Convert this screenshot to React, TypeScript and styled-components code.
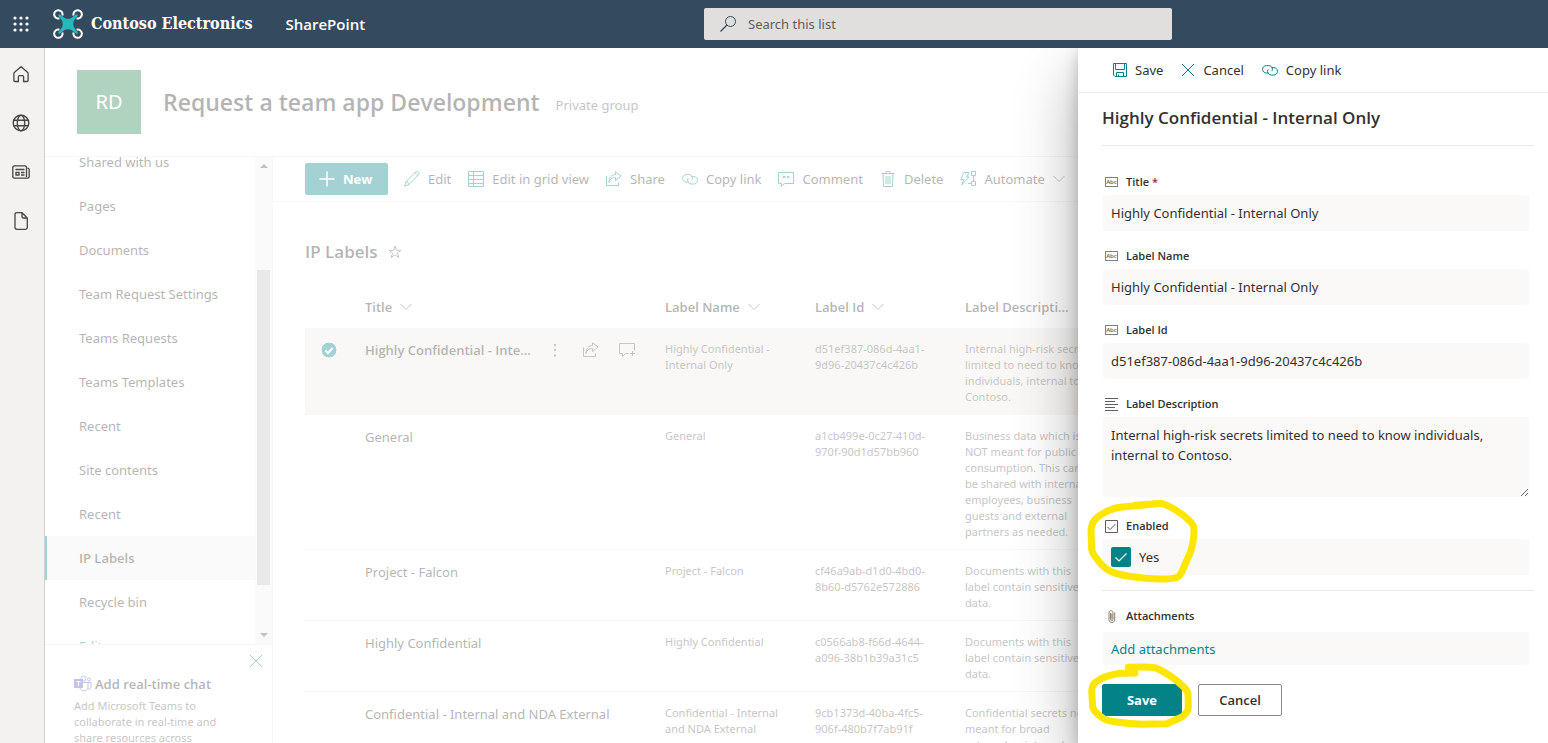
import React from "react";
import styled, { createGlobalStyle } from "styled-components";

const teal = "#038387";
const ink = "#323130";
const strong = `font-family: "Open Sans", sans-serif; font-weight: 600;`;

const Global = createGlobalStyle`
  * { box-sizing: border-box; }
  body {
    margin: 0;
    background: #fff;
    color: ${ink};
    font-family: "Noto Sans", "Open Sans", sans-serif;
    font-size: 13px;
    line-height: 20px;
  }
  button, input, textarea { font: inherit; color: inherit; }
  a { color: inherit; text-decoration: none; }
  h1, h2, h3, p, ul { margin: 0; padding: 0; }
`;

/* ---------- icons ---------- */

type IconProps = { size?: number; box?: string; children: React.ReactNode };

const Svg = styled.svg`
  flex: none;
  display: block;
  fill: none;
  stroke: currentColor;
  stroke-width: 1;
`;

const Icon = ({ size = 16, box = "0 0 16 16", children }: IconProps) => (
  <Svg width={size} height={size} viewBox={box} aria-hidden="true">{children}</Svg>
);

const ShareIcon = () => (
  <Icon>
    <path d="M.5 5.5v9h12v-3M3 11.5c.6-3.400 3-5 6.500-5V9.500L15.200 5 9.500.800V3.500C5.500 3.700 3.200 6.500 3 11.500z" />
  </Icon>
);
const LinkIcon = () => (
  <Icon>
    <path d="M6.500 11H4.200C2.100 11 .6 9.400.6 7.300S2.200 3.600 4.300 3.600h2.400c2.100 0 3.700 1.500 3.700 3.600 0 .8-.2 1.400-.6 2M9.500 5.600h2.300c2.100 0 3.700 1.600 3.700 3.700S13.900 13 11.800 13H9.300c-2.100 0-3.700-1.600-3.700-3.700 0-.8.2-1.500.7-2.100" />
  </Icon>
);
const ChevronIcon = () => (
  <Icon size={12} box="0 0 12 12"><path d="M.5 3l5.500 5.500L11.500 3" stroke="#605e5c" /></Icon>
);
const CloseIcon = ({ size = 14 }: { size?: number }) => (
  <Icon size={size} box="0 0 14 14"><path d="M1 1l12 12M13 1L1 13" /></Icon>
);
const PencilIcon = () => (
  <Icon><path d="M.7 15.300l1.300-4.800L11.700.900c.8-.8 1.900-.6 2.700.1s.9 1.900.1 2.700L5 13.500zM2 10.500c1.700.3 2.700 1.300 3 3M10.700 2c1.700.3 2.500 1.200 2.800 2.800" /></Icon>
);
const GridIcon = () => (
  <Icon><path d="M.5.5h15v15H.5zM5.500.5v15M.5 4.500h15M.5 8.500h15M.5 12.500h15" /></Icon>
);
const CommentIcon = () => (
  <Icon>
    <path d="M.5 1.500h15v11H6.800L3.500 15.300v-2.800h-3z" />
    <path d="M5 5.500h2v2M9 5.500h2v2M5.500 5.500v1.500M9.500 5.500v1.500" />
  </Icon>
);
const CommentAddIcon = () => (
  <Icon><path d="M9.500 11.500H6.500L3.500 14.500v-3h-3v-10h15v7M13.500 9v5M11 11.500h5" /></Icon>
);
const TrashIcon = () => (
  <Icon><path d="M1.500 2.500h13M6 2.500v-2h4v2M3 2.500l.5 13h9l.5-13M6 5v8M8 5v8M10 5v8" /></Icon>
);
const AutomateIcon = () => (
  <Icon>
    <path d="M4 1.500h5L6.500 6H9l-7.500 8L4 8.500H.8zM11.500.5h4v4h-4zM11.500 10.500h4v4h-4zM13.500 4.500v6M8 12.500h3.500" />
  </Icon>
);
const DiskIcon = () => (
  <Icon size={14} box="0 0 14 14">
    <path d="M.5.5h13v13H2l-1.500-1.500zM2.500.5v6h9v-6M3.500 13.500v-4h7v4M5.500 11.500v2" />
  </Icon>
);
const TextTypeIcon = () => (
  <Svg width="13" height="10" viewBox="0 0 13 10" aria-hidden="true">
    <rect x=".5" y=".5" width="12" height="9" stroke="#7a8583" />
    <text x="6.500" y="7" fontSize="6" fontWeight="600" textAnchor="middle" fill="#605e5c" stroke="none">Abc</text>
  </Svg>
);
const LinesIcon = () => (
  <Icon size={13} box="0 0 13 13"><path d="M0 .5h13M0 3.500h10M0 6.500h13M0 9.500h10M0 12.500h13" stroke="#605e5c" /></Icon>
);
const CheckBoxIcon = () => (
  <Icon size={13} box="0 0 13 13">
    <path d="M.5.5h12v12H.5zM2.500 7l2.500 2.500L10.500 4" stroke="#605e5c" />
  </Icon>
);
const ClipIcon = () => (
  <Icon size={13} box="0 0 13 13">
    <path d="M6.700 3.500v6" stroke="#d9a46c" strokeWidth="2" />
    <path d="M5.500 3v6.500c0 1.500 2.500 1.500 2.500 0V2.800C8 0 4 0 4 2.800v7C4 13.400 9.700 13.400 9.700 9.800V2.500" stroke="#8a8176" />
  </Icon>
);

/* ---------- top bar ---------- */

const Page = styled.div`
  height: 100vh;
  display: flex;
  flex-direction: column;
  overflow: hidden;
`;

const TopBar = styled.header`
  flex: none;
  height: 48px;
  display: grid;
  grid-template-columns: minmax(376px, 704fr) 468fr 376fr;
  align-items: center;
  background: #334a5f;
  color: #fff;
`;

const Brand = styled.div`
  display: flex;
  align-items: center;
`;

const Waffle = styled.button`
  width: 40px;
  height: 48px;
  padding: 0 0 0 13px;
  border: 0;
  background: none;
`;

const BrandLink = styled.a`
  display: flex;
  align-items: center;
  gap: 8px;
  margin-left: 13px;
  font-family: "DejaVu Serif Condensed", "DejaVu Serif", serif;
  font-size: 16px;
  font-weight: 700;
  white-space: nowrap;
`;

const AppName = styled.a`
  margin-left: 33px;
  font-size: 15px;
  ${strong}
`;

const Search = styled.label`
  display: flex;
  align-items: center;
  gap: 12px;
  height: 32px;
  padding: 0 16px;
  border-radius: 2px;
  background: #e1dfdd;
  color: #334a5f;
`;

const SearchInput = styled.input`
  flex: 1;
  min-width: 0;
  border: 0;
  padding: 0;
  background: none;
  outline: none;
  &::placeholder { color: #605e5c; opacity: 1; }
`;

/* ---------- site shell ---------- */

const Workspace = styled.div`
  position: relative;
  flex: 1;
  min-height: 0;
  display: flex;
  overflow: hidden;
`;

const Rail = styled.nav`
  flex: none;
  width: 45px;
  display: flex;
  flex-direction: column;
  align-items: center;
  gap: 29px;
  padding: 16px 2px 0 0;
  background: #f3f2f1;
  border-right: 1px solid #d2d0ce;
  color: #484644;
`;

const RailLink = styled.a`
  display: block;
`;

const Site = styled.div`
  position: relative;
  flex: 1;
  min-width: 0;
  display: flex;
  flex-direction: column;
`;

const Veil = styled.div`
  position: absolute;
  inset: 0;
  background: rgba(255, 255, 255, 0.64);
`;

const SiteHeader = styled.div`
  flex: none;
  height: 109px;
  display: flex;
  align-items: center;
  padding: 0 32px;
  border-bottom: 1px solid #edebe9;
`;

const SiteLogo = styled.div`
  width: 64px;
  height: 64px;
  display: grid;
  place-items: center;
  background: #24854e;
  color: #fff;
  font-size: 20px;
`;

const SiteTitle = styled.h1`
  margin: 0 16px 0 22px;
  font-size: 23px;
  line-height: 32px;
  ${strong}
  white-space: nowrap;
`;

const SiteKind = styled.span`
  padding-top: 6px;
  color: #605e5c;
`;

const SiteBody = styled.div`
  flex: 1;
  min-height: 0;
  display: flex;
`;

const Side = styled.aside`
  flex: none;
  width: 228px;
  display: flex;
  flex-direction: column;
  border-right: 1px solid #edebe9;
`;

const NavArea = styled.nav`
  flex: 1;
  min-height: 0;
  display: flex;
  overflow: hidden;
`;

const NavList = styled.ul`
  flex: 1;
  margin-top: -17px;
  list-style: none;
`;

const NavLink = styled.a<{ $active?: boolean; $accent?: boolean }>`
  display: flex;
  align-items: center;
  height: 44px;
  padding-left: 32px;
  border-left: 2px solid ${p => (p.$active ? teal : "transparent")};
  background: ${p => (p.$active ? "#f3f2f1" : "none")};
  color: ${p => (p.$accent ? teal : ink)};
  ${p => p.$active && strong}
`;

const ScrollTrack = styled.div`
  width: 17px;
  display: flex;
  flex-direction: column;
  align-items: center;
  padding: 7px 0;
  background: #f1f1f1;
  color: #505050;
`;

const ScrollThumb = styled.div`
  width: 13px;
  flex: 315;
  background: #c1c1c1;
`;

const Spacer = styled.div<{ $grow: number }>`
  flex: ${p => p.$grow};
`;

const Promo = styled.section`
  flex: none;
  height: 99px;
  overflow: hidden;
  border-top: 1px solid #edebe9;
  padding: 9px 9px 0 29px;
  color: #605e5c;
  font-size: 11px;
  line-height: 16px;
`;

const PromoClose = styled.button`
  display: block;
  margin-left: auto;
  padding: 0;
  border: 0;
  background: none;
  color: ${teal};
`;

const PromoTitle = styled.h3`
  display: flex;
  align-items: center;
  gap: 3px;
  margin: 6px 0 4px;
  color: ${ink};
  font-size: 13px;
  line-height: 20px;
  ${strong}
`;

const PromoText = styled.p`
  width: 160px;
  white-space: pre-line;
`;

const Content = styled.main`
  flex: 1;
  min-width: 0;
  overflow: hidden;
`;

const CommandBar = styled.div`
  display: flex;
  align-items: center;
  height: 45px;
  padding-left: 32px;
  border-bottom: 1px solid #edebe9;
`;

const NewButton = styled.button`
  display: flex;
  align-items: center;
  gap: 8px;
  width: 83px;
  height: 32px;
  margin-right: 8px;
  padding: 0 14px;
  border: 0;
  border-radius: 2px;
  background: ${teal};
  color: #fff;
  font-family: "Open Sans", sans-serif;
  font-weight: 700;
`;

const Command = styled.button`
  display: flex;
  align-items: center;
  gap: 8px;
  height: 32px;
  padding: 0 9px 0 8px;
  border: 0;
  background: none;
  white-space: nowrap;
  & > svg:first-child { color: ${teal}; }
`;

const ListTitle = styled.h2`
  display: flex;
  align-items: center;
  gap: 10px;
  padding: 38px 32px 0;
  font-size: 17px;
  line-height: 24px;
  ${strong}
`;

const Table = styled.table`
  width: calc(100% - 64px);
  margin: 22px 32px 0;
  border-collapse: collapse;
  table-layout: fixed;
`;

const HeadCell = styled.th<{ $w?: number }>`
  width: ${p => (p.$w ? `${p.$w}px` : "auto")};
  height: 42px;
  padding: 0;
  text-align: left;
  ${strong}
`;

const HeadLabel = styled.span`
  display: flex;
  align-items: center;
  gap: 8px;
`;

const Clip = styled.span<{ $w: number }>`
  display: block;
  width: ${p => p.$w}px;
  overflow: hidden;
  text-overflow: ellipsis;
  white-space: nowrap;
`;

const Row = styled.tr<{ $selected?: boolean }>`
  background: ${p => (p.$selected ? "#edebe9" : "none")};
  border-bottom: 1px solid #edebe9;
`;

const Cell = styled.td<{ $small?: boolean }>`
  padding: ${p => (p.$small ? "13px 0 9px" : "12px 0 8px")};
  vertical-align: top;
  white-space: pre;
  ${p => p.$small && "font-size: 11px; line-height: 16px; color: #605e5c;"}
`;

const NameLine = styled.div<{ $strong?: boolean }>`
  display: flex;
  align-items: center;
  ${p => p.$strong && strong}
`;

const RowActions = styled.div`
  display: flex;
  align-items: center;
  gap: 20px;
  padding-left: 14px;
  color: #605e5c;
`;

const RowButton = styled.button`
  display: block;
  padding: 0;
  border: 0;
  background: none;
`;

/* ---------- edit panel ---------- */

const Panel = styled.aside`
  position: absolute;
  top: 0;
  right: 0;
  bottom: 0;
  width: 470px;
  background: #fff;
  box-shadow: 0 26px 58px rgba(0, 0, 0, 0.32), 0 5px 14px rgba(0, 0, 0, 0.22);
`;

const PanelBar = styled.div`
  display: flex;
  align-items: center;
  gap: 1px;
  height: 45px;
  padding-left: 27px;
  border-bottom: 1px solid #edebe9;
`;

const Form = styled.form`
  margin: 0 14px 0 24px;
`;

const PanelTitle = styled.h2`
  height: 53px;
  padding-top: 11px;
  border-bottom: 1px solid #edebe9;
  font-size: 17px;
  line-height: 28px;
  ${strong}
`;

const Fields = styled.div`
  display: flex;
  flex-direction: column;
  gap: 12px;
  padding: 23px 5px 15px 1px;
  border-bottom: 1px solid #edebe9;
`;

const Field = styled.div``;

const FieldLabel = styled.label`
  display: flex;
  align-items: center;
  gap: 8px;
  height: 26px;
  padding-left: 2px;
  font-size: 11px;
  ${strong}
`;

const Required = styled.span`
  margin-left: -5px;
  color: #a4262c;
`;

const TextBox = styled.input`
  display: block;
  width: 100%;
  height: 36px;
  padding: 0 8px;
  border: 0;
  border-radius: 2px;
  background: #faf9f8;
`;

const TextArea = styled.textarea`
  display: block;
  width: 100%;
  height: 80px;
  margin-bottom: 4px;
  padding: 8px;
  border: 0;
  border-radius: 2px;
  background: #faf9f8;
  resize: vertical;
`;

const CheckRow = styled.label`
  display: flex;
  align-items: center;
  gap: 8px;
  height: 36px;
  padding: 0 8px;
  border-radius: 2px;
  background: #faf9f8;
`;

const CheckMark = styled.span`
  display: grid;
  width: 20px;
  height: 20px;
  color: #fff;
  & > * { grid-area: 1 / 1; place-self: center; }
`;

const CheckInput = styled.input`
  appearance: none;
  width: 20px;
  height: 20px;
  margin: 0;
  border-radius: 2px;
  background: ${teal};
`;

const Attachments = styled.div`
  padding: 12px 5px 0 1px;
`;

const AddBox = styled.div`
  display: flex;
  align-items: center;
  height: 33px;
  margin-top: 3px;
  padding: 0 8px;
  border-radius: 2px;
  background: #faf9f8;
  color: ${teal};
`;

const Actions = styled.div`
  display: flex;
  gap: 16px;
  margin-top: 19px;
`;

const ActionButton = styled.button<{ $primary?: boolean }>`
  width: ${p => (p.$primary ? 80 : 84)}px;
  height: 32px;
  padding: 0;
  border: 1px solid ${p => (p.$primary ? teal : "#8a8886")};
  border-radius: 2px;
  background: ${p => (p.$primary ? teal : "#fff")};
  color: ${p => (p.$primary ? "#fff" : ink)};
  font-family: "Open Sans", sans-serif;
  font-weight: ${p => (p.$primary ? 700 : 600)};
`;

const Marker = styled.svg`
  position: absolute;
  left: 0;
  top: 442px;
  fill: none;
  stroke: #ffe600;
  stroke-width: 21;
  stroke-linecap: round;
  stroke-linejoin: round;
  pointer-events: none;
`;

/* ---------- data ---------- */

const navItems = [
  "Shared with us", "Pages", "Documents", "Team Request Settings", "Teams Requests",
  "Teams Templates", "Recent", "Site contents", "Recent", "IP Labels", "Recycle bin", "Edit",
];

const commands = [
  { icon: <PencilIcon />, text: "Edit" },
  { icon: <GridIcon />, text: "Edit in grid view" },
  { icon: <ShareIcon />, text: "Share" },
  { icon: <LinkIcon />, text: "Copy link" },
  { icon: <CommentIcon />, text: "Comment" },
  { icon: <TrashIcon />, text: "Delete" },
  { icon: <AutomateIcon />, text: "Automate", menu: true },
];

const rows = [
  {
    title: "Highly Confidential - Internal Only",
    name: "Highly Confidential -\nInternal Only",
    id: "d51ef387-086d-4aa1-\n9d96-20437c4c426b",
    text: "Internal high-risk secrets\nlimited to need to know\nindividuals, internal to\nContoso.",
    selected: true,
  },
  {
    title: "General",
    name: "General",
    id: "a1cb499e-0c27-410d-\n970f-90d1d57bb960",
    text: "Business data which is\nNOT meant for public\nconsumption. This can\nbe shared with internal\nemployees, business\nguests and external\npartners as needed.",
  },
  {
    title: "Project - Falcon",
    name: "Project - Falcon",
    id: "cf46a9ab-d1d0-4bd0-\n8b60-d5762e572886",
    text: "Documents with this\nlabel contain sensitive\ndata.",
  },
  {
    title: "Highly Confidential",
    name: "Highly Confidential",
    id: "c0566ab8-f66d-4644-\na096-38b1b39a31c5",
    text: "Documents with this\nlabel contain sensitive\ndata.",
  },
  {
    title: "Confidential - Internal and NDA External",
    name: "Confidential - Internal\nand NDA External",
    id: "9cb1373d-40ba-4fc5-\n906f-480b7f7ab91f",
    text: "Confidential secrets not\nmeant for broad\nexternal or internal\ndistribution.",
  },
];

const textFields = [
  { id: "title", label: "Title", value: "Highly Confidential - Internal Only", required: true },
  { id: "label-name", label: "Label Name", value: "Highly Confidential - Internal Only" },
  { id: "label-id", label: "Label Id", value: "d51ef387-086d-4aa1-9d96-20437c4c426b" },
];

/* ---------- parts ---------- */

const DroneLogo = () => (
  <Svg width="30" height="30" viewBox="0 0 30 30" aria-hidden="true">
    <g stroke="#fff" strokeWidth="2">
      <path d="M6.400 9.400A4.200 4.200 0 1 1 9.400 6.400" />
      <path d="M20.600 6.400A4.200 4.200 0 1 1 23.600 9.400" />
      <path d="M23.600 20.600A4.200 4.200 0 1 1 20.600 23.600" />
      <path d="M9.400 23.600A4.200 4.200 0 1 1 6.400 20.600" />
    </g>
    <path
      d="M7 5.500L12 9.300Q15 10.300 18 9.300L23 5.500Q25.500 4.500 24.500 7L20.700 12Q19.700 15 20.700 18L24.500 23Q25.500 25.500 23 24.500L18 20.700Q15 19.700 12 20.700L7 24.500Q4.500 25.500 5.500 23L9.300 18Q10.300 15 9.300 12L5.500 7Q4.500 4.500 7 5.500z"
      fill="#27b8bc"
      stroke="none"
    />
  </Svg>
);

const TeamsLogo = () => (
  <Icon size={18} box="0 0 18 18">
    <g stroke="#5b5fc7">
      <circle cx="9.500" cy="3.500" r="2.500" />
      <circle cx="15" cy="4.500" r="1.500" />
      <path d="M9 7.500h5v4.500c0 5-7.500 5-8 1M14 7.500h3v4c0 2-1.500 3-3.200 2.500" />
    </g>
    <rect x="0" y="4" width="9" height="9" fill="#5b5fc7" stroke="none" />
    <path d="M2.500 6.500h4M4.500 6.500v4.500" stroke="#fff" />
  </Icon>
);

const Header = () => (
  <TopBar>
    <Brand>
      <Waffle type="button" aria-label="App launcher">
        <Svg width="16" height="16" viewBox="0 0 16 16" aria-hidden="true">
          {[2, 8, 14].map(y => [2, 8, 14].map(x => (
            <circle key={`${x}-${y}`} cx={x} cy={y} r="1.600" fill="#fff" stroke="none" />
          )))}
        </Svg>
      </Waffle>
      <BrandLink href="#home"><DroneLogo />Contoso Electronics</BrandLink>
      <AppName href="#sharepoint">SharePoint</AppName>
    </Brand>
    <Search>
      <Icon><circle cx="10.500" cy="5.500" r="5" /><path d="M7 9L.5 15.500" strokeWidth="1.300" /></Icon>
      <SearchInput type="text" placeholder="Search this list" aria-label="Search this list" />
    </Search>
  </TopBar>
);

const AppRail = () => (
  <Rail>
    <RailLink href="#home" aria-label="Home">
      <Icon size={20} box="0 0 20 20">
        <path strokeWidth="1.300" d="M10 2.700l-6.500 5.600c-.4.300-.6.700-.6 1.100v7.100c0 .6.4 1 1 1h3.500v-4.700c0-.7.500-1.100 1.100-1.100h3c.6 0 1.100.4 1.100 1.100v4.700h3.500c.6 0 1-.4 1-1V9.400c0-.4-.2-.8-.6-1.100z" />
      </Icon>
    </RailLink>
    <RailLink href="#sites" aria-label="Sites">
      <Icon size={20} box="0 0 20 20">
        <g strokeWidth="1.400">
          <circle cx="10" cy="10" r="7.800" />
          <ellipse cx="10" cy="10" rx="3.700" ry="7.800" />
          <path d="M2.800 7.300h14.400M2.800 12.700h14.400" />
        </g>
      </Icon>
    </RailLink>
    <RailLink href="#news" aria-label="News">
      <Icon size={20} box="0 0 20 20">
        <g strokeWidth="1.300">
          <path d="M15.500 15V5.500c0-1-.8-1.700-1.700-1.700H3.500c-1 0-1.700.8-1.700 1.700v9c0 1 .8 1.700 1.700 1.700h13c1 0 1.700-.8 1.700-1.700V7.500c0-.9-.7-1.300-1.700-1.300M4.500 7.500h9M10 10.500h3.500M10 13h3.500" />
          <path d="M5 10.300h3v2.700H5z" />
        </g>
      </Icon>
    </RailLink>
    <RailLink href="#files" aria-label="Files">
      <Icon size={20} box="0 0 20 20">
        <path strokeWidth="1.300" d="M11 1.700H6C5 1.700 4 2.500 4 3.500v13c0 1 1 1.800 2 1.800h8.500c1 0 1.800-.8 1.800-1.800V7zM11 1.700v4c0 .7.500 1.300 1.300 1.300h4" />
      </Icon>
    </RailLink>
  </Rail>
);

const SideNav = () => (
  <Side>
    <NavArea>
      <NavList>
        {navItems.map((item, i) => (
          <li key={i}>
            <NavLink href="#nav" $active={item === "IP Labels"} $accent={item === "Edit"}>{item}</NavLink>
          </li>
        ))}
      </NavList>
      <ScrollTrack>
        <Svg width="8" height="4" viewBox="0 0 8 4"><path d="M0 4l4-4 4 4z" fill="currentColor" stroke="none" /></Svg>
        <Spacer $grow={102} />
        <ScrollThumb />
        <Spacer $grow={48} />
        <Svg width="8" height="4" viewBox="0 0 8 4"><path d="M0 0l4 4 4-4z" fill="currentColor" stroke="none" /></Svg>
      </ScrollTrack>
    </NavArea>
    <Promo>
      <PromoClose type="button" aria-label="Dismiss"><CloseIcon /></PromoClose>
      <PromoTitle><TeamsLogo />Add real-time chat</PromoTitle>
      <PromoText>{"Add Microsoft Teams to\ncollaborate in real-time and\nshare resources across"}</PromoText>
    </Promo>
  </Side>
);

const ListTable = () => (
  <Table>
    <thead>
      <tr>
        <HeadCell $w={60} />
        <HeadCell $w={300}><HeadLabel>Title <ChevronIcon /></HeadLabel></HeadCell>
        <HeadCell $w={150}><HeadLabel>Label Name <ChevronIcon /></HeadLabel></HeadCell>
        <HeadCell $w={150}><HeadLabel>Label Id <ChevronIcon /></HeadLabel></HeadCell>
        <HeadCell><Clip $w={106}>Label Description</Clip></HeadCell>
      </tr>
    </thead>
    <tbody>
      {rows.map(r => (
        <Row key={r.id} $selected={r.selected}>
          <Cell>
            {r.selected && (
              <NameLine>
                <Svg width="48" height="20" viewBox="0 0 48 20" aria-hidden="true">
                  <circle cx="24" cy="10" r="8" fill={teal} stroke="#fff" />
                  <path d="M20.500 10.500l2.500 2.500 4.500-5" stroke="#fff" strokeWidth="2" />
                </Svg>
              </NameLine>
            )}
          </Cell>
          <Cell>
            <NameLine $strong={r.selected}>
              {r.selected ? <Clip $w={168}>{r.title}</Clip> : r.title}
              {r.selected && (
                <RowActions>
                  <RowButton type="button" aria-label="More actions">
                    <Icon>
                      <path d="M7 3h2M7 8h2M7 13.500h2" strokeWidth="2" />
                    </Icon>
                  </RowButton>
                  <RowButton type="button" aria-label="Share"><ShareIcon /></RowButton>
                  <RowButton type="button" aria-label="Add comment"><CommentAddIcon /></RowButton>
                </RowActions>
              )}
            </NameLine>
          </Cell>
          <Cell $small>{r.name}</Cell>
          <Cell $small>{r.id}</Cell>
          <Cell $small>{r.text}</Cell>
        </Row>
      ))}
    </tbody>
  </Table>
);

const EditPanel = () => (
  <Panel aria-label="Edit item">
    <PanelBar>
      <Command type="button"><DiskIcon />Save</Command>
      <Command type="button"><CloseIcon />Cancel</Command>
      <Command type="button"><LinkIcon />Copy link</Command>
    </PanelBar>
    <Form onSubmit={e => e.preventDefault()}>
      <PanelTitle>Highly Confidential - Internal Only</PanelTitle>
      <Fields>
        {textFields.map(f => (
          <Field key={f.id}>
            <FieldLabel htmlFor={f.id}>
              <TextTypeIcon />{f.label}{f.required && <Required>*</Required>}
            </FieldLabel>
            <TextBox id={f.id} type="text" defaultValue={f.value} />
          </Field>
        ))}
        <Field>
          <FieldLabel htmlFor="label-description"><LinesIcon />Label Description</FieldLabel>
          <TextArea
            id="label-description"
            defaultValue="Internal high-risk secrets limited to need to know individuals, internal to Contoso."
          />
        </Field>
        <Field>
          <FieldLabel htmlFor="enabled"><CheckBoxIcon />Enabled</FieldLabel>
          <CheckRow>
            <CheckMark>
              <CheckInput id="enabled" type="checkbox" defaultChecked />
              <Icon size={12} box="0 0 12 12"><path d="M.5 6.500L4 10l7.500-7.500" strokeWidth="1.200" /></Icon>
            </CheckMark>
            Yes
          </CheckRow>
        </Field>
      </Fields>
      <Attachments>
        <FieldLabel as="div"><ClipIcon />Attachments</FieldLabel>
        <AddBox><a href="#attach">Add attachments</a></AddBox>
      </Attachments>
      <Actions>
        <ActionButton type="submit" $primary>Save</ActionButton>
        <ActionButton type="button">Cancel</ActionButton>
      </Actions>
    </Form>
    <Marker width="160" height="253" viewBox="24 0 480 759" aria-hidden="true">
      <path d="M195 46L275 40Q300 48 320 62Q362 90 370 108Q374 120 371 140Q369 165 362 185L340 235Q332 258 320 263Q300 268 280 267Q240 268 200 262Q150 256 128 247Q100 235 82 208Q66 190 65 178L63 118Q66 95 82 82Q115 57 150 52L275 40" />
      <path d="M195 549L150 550Q105 557 85 571Q66 582 65 602L68 652Q74 668 98 684Q112 694 140 696Q190 704 240 702L290 701L336 681Q354 668 355 652L354 612Q352 600 338 588Q300 552 258 534Q235 529 175 532" />
    </Marker>
  </Panel>
);

export default function App() {
  return (
    <>
      <Global />
      <Page>
        <Header />
        <Workspace>
          <AppRail />
          <Site>
            <SiteHeader>
              <SiteLogo>RD</SiteLogo>
              <SiteTitle>Request a team app Development</SiteTitle>
              <SiteKind>Private group</SiteKind>
            </SiteHeader>
            <SiteBody>
              <SideNav />
              <Content>
                <CommandBar>
                  <NewButton type="button">
                    <Icon><path d="M8 .5v15M.5 8h15" strokeWidth="1.500" /></Icon>New
                  </NewButton>
                  {commands.map(c => (
                    <Command key={c.text} type="button">
                      {c.icon}{c.text}{c.menu && <ChevronIcon />}
                    </Command>
                  ))}
                </CommandBar>
                <ListTitle>
                  IP Labels
                  <Icon size={14} box="0 0 14 14">
                    <path d="M7 1l1.500 4.300H13L9.400 8l1.400 4.500L7 9.800l-3.800 2.700L4.600 8 1 5.300h4.500z" stroke="#605e5c" />
                  </Icon>
                </ListTitle>
                <ListTable />
              </Content>
            </SiteBody>
            <Veil />
          </Site>
          <EditPanel />
        </Workspace>
      </Page>
    </>
  );
}
